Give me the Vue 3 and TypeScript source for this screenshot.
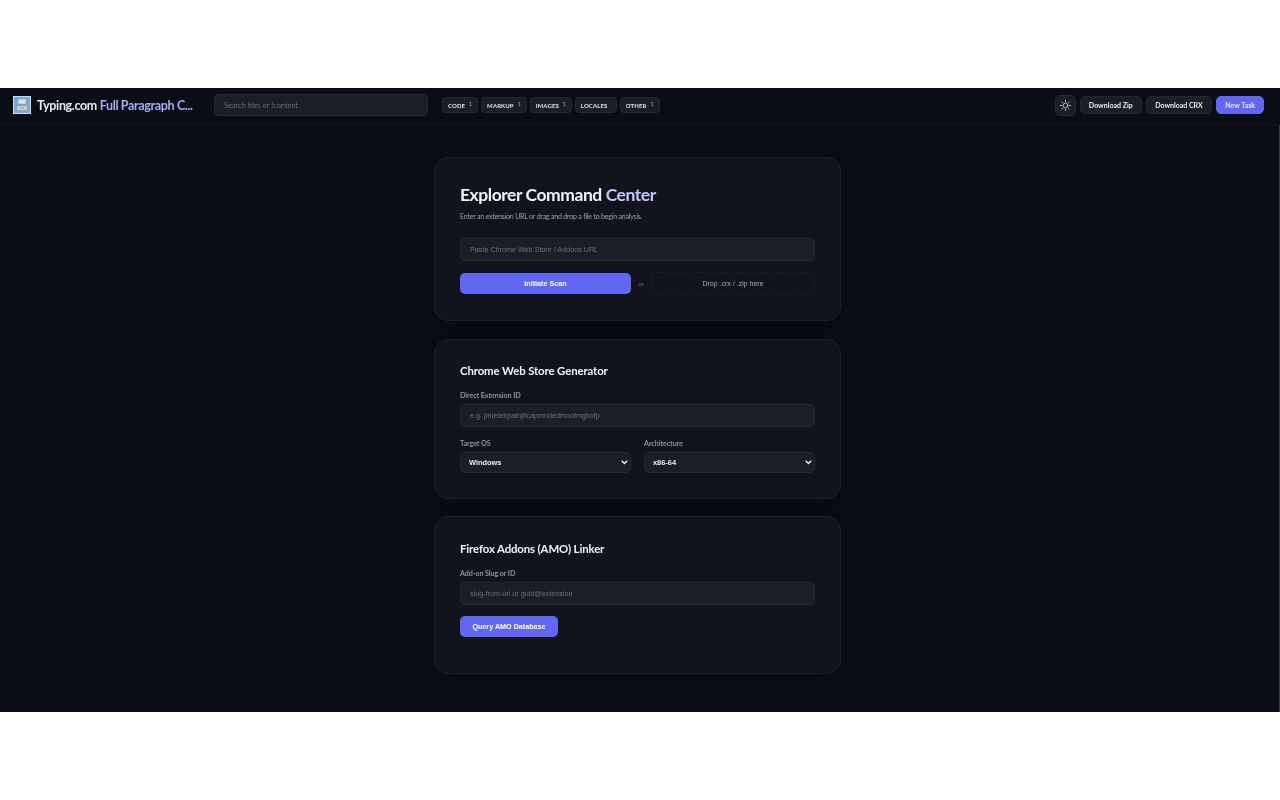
<template>
  <div class="shell">
    <header class="topbar">
      <div class="brand">
        <svg class="logo" width="18" height="18" viewBox="0 0 18 18">
          <rect width="18" height="18" fill="#c9dcec" />
          <rect x="1" y="1" width="16" height="16" fill="#78acd9" />
          <rect x="5" y="3" width="8" height="5" fill="#dbe6ef" stroke="#7b8792" stroke-width=".5" />
          <rect x="3.5" y="9.5" width="11" height="5" fill="#c6ced6" stroke="#7b8792" stroke-width=".5" />
          <rect x="7.5" y="11.5" width="3" height=".8" fill="#7b8792" />
        </svg>
        <span class="brand-name">Typing.com <em>Full Paragraph C...</em></span>
      </div>
      <div class="search">Search files or !content</div>
      <nav class="tabs">
        <div class="tab" v-for="t in tabs" :key="t.name">
          {{ t.name }}<span class="count">{{ t.count || '' }}</span>
        </div>
      </nav>
      <div class="actions">
        <button class="theme" aria-label="Theme">
          <svg width="11" height="11" viewBox="0 0 24 24" fill="none" stroke="#d5d9e2" stroke-width="1.8" stroke-linecap="round">
            <circle cx="12" cy="12" r="5" />
            <path d="M12 1v3M12 20v3M4.2 4.2l2.1 2.1M17.7 17.7l2.1 2.1M1 12h3M20 12h3M4.2 19.8l2.1-2.1M17.7 6.3l2.1-2.1" />
          </svg>
        </button>
        <button class="act">Download Zip</button>
        <button class="act">Download CRX</button>
        <button class="act primary">New Task</button>
      </div>
    </header>

    <main class="content">
      <section class="card hero">
        <h1>Explorer Command <em>Center</em></h1>
        <p class="sub">Enter an extension URL or drag and drop a file to begin analysis.</p>
        <input class="field" placeholder="Paste Chrome Web Store / Addons URL" />
        <div class="scan-row">
          <button class="cta wide">Initiate Scan</button>
          <span class="or">or</span>
          <div class="drop">Drop .crx / .zip here</div>
        </div>
      </section>

      <section class="card store">
        <h2>Chrome Web Store Generator</h2>
        <label>Direct Extension ID</label>
        <input class="field" placeholder="e.g. jmiefebpafnjifcapmndedmoofmgbofp" />
        <div class="two">
          <div class="col" v-for="s in selects" :key="s.label">
            <label>{{ s.label }}</label>
            <div class="pick-wrap">
              <select class="pick"><option>{{ s.value }}</option></select>
              <svg class="chev" width="7" height="5" viewBox="0 0 7 5" fill="none" stroke="#eef0f5" stroke-width="1.4">
                <path d="M.7.8 3.5 3.6 6.3.8" />
              </svg>
            </div>
          </div>
        </div>
      </section>

      <section class="card amo">
        <h2>Firefox Addons (AMO) Linker</h2>
        <label>Add-on Slug or ID</label>
        <input class="field" placeholder="slug-from-url or guid@extension" />
        <button class="cta query">Query AMO Database</button>
      </section>
    </main>
  </div>
</template>

<script setup lang="ts">
const tabs = [
  { name: 'CODE', count: 1 },
  { name: 'MARKUP', count: 1 },
  { name: 'IMAGES', count: 1 },
  { name: 'LOCALES', count: 0 },
  { name: 'OTHER', count: 1 },
]

const selects = [
  { label: 'Target OS', value: 'Windows' },
  { label: 'Architecture', value: 'x86-64' },
]
</script>

<style>
html, body { margin: 0; background: #fff; }
</style>

<style scoped>
.shell {
  margin-top: 88px;
  height: 624px;
  display: flex;
  flex-direction: column;
  overflow: hidden;
  background: #0a0d14;
  font-family: Lato, 'Noto Sans', sans-serif;
  color: #f1f3f8;
  /* the reference is a downscaled capture, its text is soft */
  filter: blur(.35px);
}
.topbar {
  box-sizing: border-box;
  height: 37px;
  flex-shrink: 0;
  padding: 0 16px 2px 13px;
  display: flex;
  align-items: center;
  border-bottom: 1px solid #14171e;
}
.brand { width: 201px; display: flex; align-items: center; gap: 6px; flex-shrink: 0; }
.logo { flex-shrink: 0; }
.brand-name { font-size: 12.5px; font-weight: 700; letter-spacing: -.35px; white-space: nowrap; color: #e8ebf3; }
.brand-name em { font-style: normal; color: #a5b0f5; }
.search {
  box-sizing: border-box;
  width: 214px;
  height: 22px;
  padding-left: 9px;
  margin-right: 14px;
  display: flex;
  align-items: center;
  flex-shrink: 0;
  font-size: 7.4px;
  color: #666c78;
  background: #1a1e28;
  border: 1px solid #252933;
  border-radius: 5px;
}
.tabs { display: flex; gap: 2.7px; }
.tab {
  box-sizing: border-box;
  height: 16.5px;
  padding: 0 5px;
  display: flex;
  align-items: center;
  font-size: 6px;
  font-weight: 700;
  letter-spacing: .1px;
  color: #dfe2ea;
  background: #1a1e28;
  border: 1px solid #242833;
  border-radius: 4px;
}
.count { margin-left: 3.7px; margin-bottom: 3px; font-size: 6px; font-weight: 400; color: #9aa0ad; line-height: 1; }
.actions { margin-left: auto; display: flex; align-items: center; gap: 4.5px; }
.theme {
  width: 21px;
  height: 21px;
  margin-right: -1px;
  padding: 0;
  display: flex;
  align-items: center;
  justify-content: center;
  background: #1a1e28;
  border: 1px solid #252933;
  border-radius: 5px;
}
.act {
  height: 18.5px;
  padding: 0 8px;
  font-family: inherit;
  font-size: 7px;
  font-weight: 700;
  color: #e8ebf3;
  background: #1a1e28;
  border: 1px solid #222631;
  border-radius: 5px;
}
.act.primary { background: #6366f1; border-color: #6366f1; color: #e9eaff; }
.content {
  flex: 1;
  padding: 32px 4px 0 0;
  display: flex;
  flex-direction: column;
  align-items: center;
  gap: 17.6px;
  border-right: 1px solid #34373d;
}
.card {
  box-sizing: border-box;
  width: 407px;
  height: 160px;
  padding: 24px 25px 0;
  display: flex;
  flex-direction: column;
  align-items: flex-start;
  flex-shrink: 0;
  background: #11141c;
  border: 1px solid #1c2029;
  border-radius: 14px;
  box-shadow: 0 6px 20px rgba(0, 0, 0, .25);
}
.hero { height: 164px; padding-top: 26px; }
.store { padding-top: 23.5px; }
.amo { height: 158px; }
h1 { margin: 0; font-size: 17.5px; line-height: 22px; font-weight: 700; color: #f1f3f8; letter-spacing: -.45px; }
h1 em { font-style: normal; color: #c1c8fb; }
.sub { margin: 5px 0 17px; font-size: 7px; line-height: 10px; letter-spacing: -.2px; color: #9aa1b0; }
h2 { margin: 0 0 12px; font-size: 11.4px; line-height: 16px; font-weight: 700; letter-spacing: -.12px; color: #f1f3f8; }
label { display: block; margin-bottom: 3px; font-size: 7.2px; line-height: 10px; font-weight: 700; letter-spacing: -.1px; color: #8a92a5; }
.field {
  box-sizing: border-box;
  width: 100%;
  height: 23px;
  padding: 0 9px;
  font-family: 'Liberation Sans', Arial, sans-serif;
  font-size: 7.2px;
  color: #fff;
  background: #1a1e28;
  border: 1px solid #252933;
  border-radius: 5px;
  outline: none;
}
.field::placeholder { color: #6d717a; opacity: 1; }
.scan-row { width: 100%; margin-top: 11px; display: flex; align-items: center; }
.cta {
  height: 21px;
  font-family: 'Liberation Sans', Arial, sans-serif;
  font-size: 7.2px;
  font-weight: 700;
  color: #fff;
  background: #6366f1;
  border: 0;
  border-radius: 5px;
}
.wide { width: 171px; flex-shrink: 0; }
.or { width: 20px; text-align: center; font-size: 6.4px; color: #5f6572; flex-shrink: 0; }
.drop {
  flex: 1;
  box-sizing: border-box;
  height: 23px;
  display: flex;
  align-items: center;
  justify-content: center;
  font-family: 'Liberation Sans', Arial, sans-serif;
  font-size: 7px;
  color: #a4a9b5;
  border: 1px dashed #1b1f27;
  border-radius: 5px;
}
.two { width: 100%; margin-top: 11.5px; display: flex; gap: 13px; }
.col { flex: 1; min-width: 0; }
.pick-wrap { position: relative; }
.pick {
  box-sizing: border-box;
  display: block;
  width: 100%;
  height: 21px;
  padding: 0 0 0 8px;
  appearance: none;
  font-family: 'Liberation Sans', Arial, sans-serif;
  font-size: 7.4px;
  font-weight: 700;
  color: #e8ebf3;
  background: #1a1e28;
  border: 1px solid #252933;
  border-radius: 5px;
}
.chev { position: absolute; right: 3px; top: 8px; pointer-events: none; }
.query { width: 98px; margin-top: 11px; }
</style>
